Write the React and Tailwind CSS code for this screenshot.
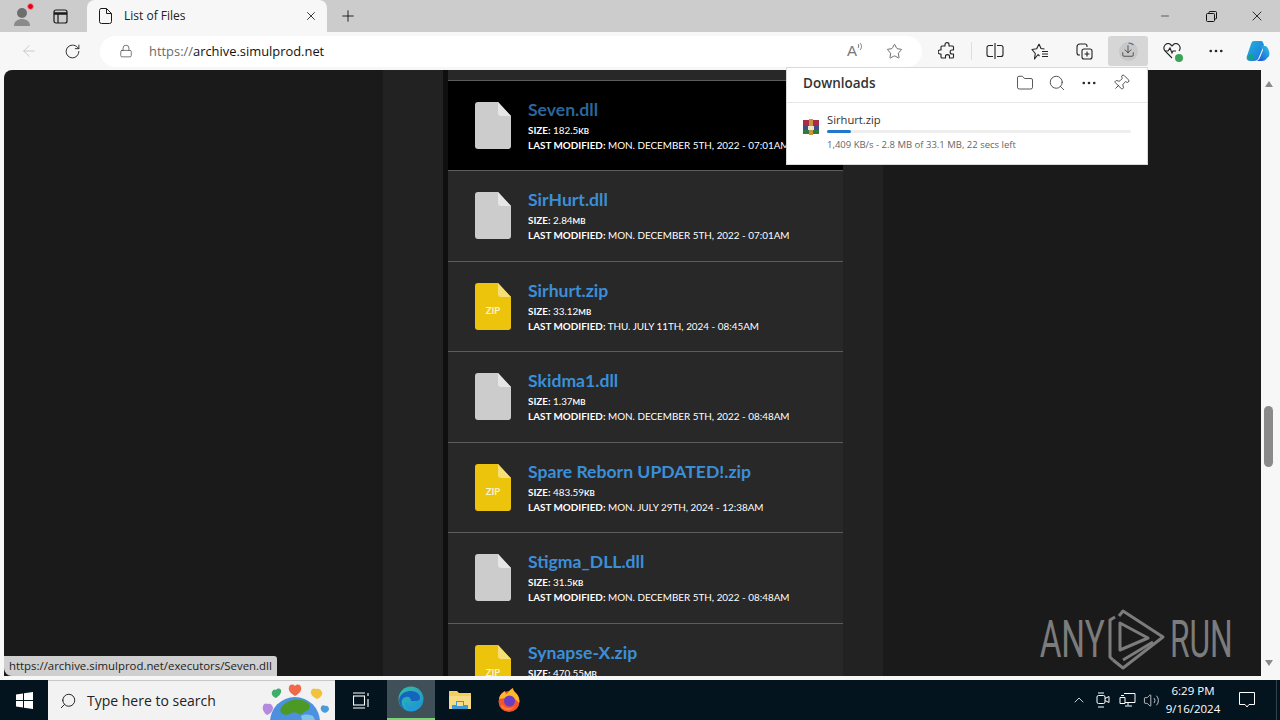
import React from "react";
import {
  ArrowLeft,
  RotateCw,
  Lock,
  Star,
  Folder,
  Search,
  MoreHorizontal,
  Pin,
  X,
  Plus,
  Minus,
  ChevronUp,
  Volume2,
  Download,
} from "lucide-react";

const files = [
  { name: "Seven.dll", size: "182.5", unit: "KB", date: "MON. DECEMBER 5TH, 2022 - 07:01AM", hover: true },
  { name: "SirHurt.dll", size: "2.84", unit: "MB", date: "MON. DECEMBER 5TH, 2022 - 07:01AM" },
  { name: "Sirhurt.zip", size: "33.12", unit: "MB", date: "THU. JULY 11TH, 2024 - 08:45AM", zip: true },
  { name: "Skidma1.dll", size: "1.37", unit: "MB", date: "MON. DECEMBER 5TH, 2022 - 08:48AM" },
  { name: "Spare Reborn UPDATED!.zip", size: "483.59", unit: "KB", date: "MON. JULY 29TH, 2024 - 12:38AM", zip: true },
  { name: "Stigma_DLL.dll", size: "31.5", unit: "KB", date: "MON. DECEMBER 5TH, 2022 - 08:48AM" },
  { name: "Synapse-X.zip", size: "470.55", unit: "MB", date: "MON. JULY 29TH, 2024 - 12:38AM", zip: true },
];

function FileIcon({ zip }) {
  const body = zip ? "#ecc40c" : "#cccccc";
  const fold = zip ? "#f5df76" : "#e6e6e6";
  return (
    <div className="relative w-9 h-[47px] shrink-0">
      <svg width="36" height="47" viewBox="0 0 36 47">
        <path d="M3 0H23L36 14V44a3 3 0 0 1-3 3H3a3 3 0 0 1-3-3V3a3 3 0 0 1 3-3Z" fill={body} />
        <path d="M23 0L36 14H26a3 3 0 0 1-3-3Z" fill={fold} />
      </svg>
      {zip && (
        <span className="absolute left-0 right-0 top-[23px] text-center text-[9.5px] leading-[10px] font-bold text-[#faf3cf]">
          ZIP
        </span>
      )}
    </div>
  );
}

function FileRow({ file }) {
  return (
    <div
      className={`h-[90.5px] border-t border-[#5c5c5c] pl-[27px] pt-[21px] flex gap-[17px] font-['Lato',sans-serif] ${
        file.hover ? "bg-black" : ""
      }`}
    >
      <FileIcon zip={file.zip} />
      <div className="text-white whitespace-nowrap">
        <div
          className={`text-[17.6px] leading-[16px] font-bold ${
            file.hover ? "text-[#2a669c]" : "text-[#3b8fd8]"
          }`}
        >
          {file.name}
        </div>
        <div className="mt-[5px] text-[9.9px] leading-[14px]">
          <b>SIZE:</b> {file.size}
          <b className="text-[8px]">{file.unit}</b>
        </div>
        <div className="text-[9.9px] leading-[14px]">
          <b>LAST MODIFIED:</b> {file.date}
        </div>
      </div>
    </div>
  );
}

function ToolIcon({ children, className = "" }) {
  return <div className={`w-10 h-[30px] flex items-center justify-center rounded-[3px] ${className}`}>{children}</div>;
}

function CopilotLogo() {
  return (
    <svg width="26" height="26" viewBox="0 0 26 26">
      <defs>
        <linearGradient id="cpA" x1="0" y1="0" x2="1" y2="1">
          <stop offset="0" stopColor="#1fb6d8" />
          <stop offset="1" stopColor="#1e6fe0" />
        </linearGradient>
        <linearGradient id="cpB" x1="1" y1="0" x2="0" y2="1">
          <stop offset="0" stopColor="#2ec4e8" />
          <stop offset="1" stopColor="#1c4fd0" />
        </linearGradient>
      </defs>
      <path d="M9 3h7c2 0 2 2 3 4l-5 12c-1 3-3 4-5 4H5c-3 0-4-3-3-5L6 6c.6-2 1.5-3 3-3Z" fill="url(#cpA)" />
      <path d="M14 8h6c2 0 3 2 4 5 1 4 0 6-2 7-1 2-3 3-5 3h-5c2-1 3-3 4-6l2-5c.4-2-2-3-4-4Z" fill="url(#cpB)" />
      <path d="M4 17c2-2 4-1 5 1l-1 4H5c-2 0-2-3-1-5Z" fill="#16a37f" />
    </svg>
  );
}

function RarIcon() {
  return (
    <svg width="16" height="16" viewBox="0 0 16 16" className="shrink-0 mt-[7px]">
      <rect x="0" y="1" width="16" height="5" fill="#a92b4a" />
      <rect x="0" y="6" width="16" height="5" fill="#3a4f8c" />
      <rect x="0" y="11" width="16" height="4" fill="#2f7a3c" />
      <rect x="6" y="0" width="4" height="16" fill="#c9943a" />
      <rect x="5" y="7" width="6" height="4" fill="#f0e6c8" />
    </svg>
  );
}

function SearchHero() {
  return (
    <svg width="70" height="40" viewBox="0 0 70 40">
      <path d="M35 16c-5-3-7-6-6-9 1-3 4-3 6-1 2-2 5-2 6 1 1 3-1 6-6 9Z" fill="#f0694b" />
      <path d="M16 18c-3-1-5-4-4-6 1-3 3-3 4-2 1-2 4-2 5 0 1 3-2 6-5 8Z" fill="#3fae6b" />
      <path d="M57 19c-4-2-7-5-6-8 1-3 4-3 5-2 2-1 5 0 6 3 1 3-2 6-5 7Z" fill="#f2c13d" />
      <path d="M7 35c-3-2-5-6-4-9 1-3 3-3 5-2 2-1 5 1 5 4 0 3-3 6-6 7Z" fill="#b38bdc" />
      <path d="M65 33c-3-1-5-3-4-6 1-2 3-2 4-1 2-1 4 1 4 3 0 2-2 3-4 4Z" fill="#4a9bdc" />
      <circle cx="35" cy="42" r="25" fill="#4c90e0" />
      <path d="M21 28c6-9 19-11 27-5 3 3 2 7-2 8-3 1-4 5-7 3-2-1-4-2-7-1-3 1-6 3-9 1-3-1-3-4-2-6Z" fill="#4c9a25" />
      <path d="M41 36c3-2 8-2 12 0l2 4H42Z" fill="#7fc4ea" />
    </svg>
  );
}

function EdgeLogo() {
  return (
    <svg width="26" height="26" viewBox="0 0 26 26">
      <defs>
        <linearGradient id="edA" x1="0" y1="0" x2="1" y2="1">
          <stop offset="0" stopColor="#35c1a0" />
          <stop offset="1" stopColor="#1b8ed8" />
        </linearGradient>
      </defs>
      <circle cx="13" cy="13" r="12.500" fill="url(#edA)" />
      <path d="M1 14C2 7 8 5 13 5c5 0 9 3 9 7 0 2-2 3-4 3h-5c0-3-2-5-5-4-4 1-5 4-4 8 1 2 2 4 3 5-3-2-6-6-6-10Z" fill="#1565c0" />
      <path d="M9 15c-1 4 2 7 6 7 3 0 6-1 8-3-2 4-6 6-10 6-4-1-7-6-4-10Z" fill="#1e9be0" />
    </svg>
  );
}

function FirefoxLogo() {
  return (
    <svg width="24" height="24" viewBox="0 0 24 24">
      <circle cx="12" cy="13.500" r="10.500" fill="#f2542d" />
      <path d="M2 11C3 6 6 4 8 3c0 2 1 3 2 3 1-2 4-5 6-6 0 2 1 3 3 5 3 3 4 7 3 10-2-2-4-5-8-6Z" fill="#ffb52c" />
      <circle cx="12.500" cy="13" r="5.500" fill="#6a3bc4" />
      <path d="M5 16c2 4 8 6 13 2-3 5-10 6-14 1Z" fill="#ff7b2e" />
    </svg>
  );
}

function FolderLogo() {
  return (
    <svg width="24" height="22" viewBox="0 0 24 22">
      <path d="M1 2h8l2 2h12v16H1Z" fill="#f4cf5e" />
      <rect x="1" y="7" width="22" height="13" fill="#f7dc85" />
      <path d="M8 12h8v4h4v4H4v-4h4Z" fill="#3f9bd8" />
      <rect x="9" y="13" width="6" height="4" fill="#f7dc85" />
    </svg>
  );
}

function RunMark() {
  return (
    <svg width="60" height="64" viewBox="0 0 60 64" fill="none" stroke="#7c7c7c" strokeWidth="3" strokeLinejoin="round" className="shrink-0">
      <path d="M7 9L2 12V49L5 52" />
      <path d="M5 52L15 60L55 29L15 3L11 8" />
      <path d="M12 15V42L40 30Z" />
      <path d="M15 52L45 34" />
    </svg>
  );
}

export default function App() {
  return (
    <div className="relative w-[1280px] h-[720px] overflow-hidden flex flex-col bg-[#f7f7f7] font-['Open_Sans','Noto_Sans',sans-serif]">
      {/* tab strip */}
      <div className="h-8 bg-[#cccccc] flex items-end shrink-0">
        <div className="w-[87px] h-8 flex items-center pl-[11px] gap-[20px]">
          <div className="relative w-[22px] h-[22px]">
            <svg width="22" height="22" viewBox="0 0 22 22">
              <circle cx="11" cy="8" r="5" fill="#6e6e6e" />
              <path d="M3 21c0-5 4-7 8-7s8 2 8 7Z" fill="#8a8a8a" />
            </svg>
            <span className="absolute right-[-1px] top-[-2px] w-[7px] h-[7px] rounded-full bg-[#e3001b] border border-[#e8a0a0]"></span>
          </div>
          <svg width="15" height="15" viewBox="0 0 15 15" fill="none" stroke="#1a1a1a" strokeWidth="1.2">
            <rect x="1" y="1" width="13" height="13" rx="2" />
            <path d="M1 4.500h13" strokeWidth="2.500" />
            <path d="M5 5v9" />
          </svg>
        </div>
        <div className="w-[240px] h-8 bg-[#f7f7f7] rounded-t-lg flex items-center pl-[12px] pr-[9px]">
          <svg width="13" height="16" viewBox="0 0 13 16" fill="none" stroke="#1a1a1a" strokeWidth="1">
            <path d="M2 .5h5.500L12.500 5.500V13.500a2 2 0 0 1-2 2H2.500a2 2 0 0 1-2-2V2.500a2 2 0 0 1 1.500-2Z" />
            <path d="M7.500.5V5.500H12.500" />
          </svg>
          <span className="ml-[12px] text-[12px] text-[#222]">List of Files</span>
          <X size={14} strokeWidth={1.5} className="ml-auto text-[#222]" />
        </div>
        <div className="h-8 flex items-center ml-[12px]">
          <Plus size={18} strokeWidth={1.2} className="text-[#111]" />
        </div>
        <div className="ml-auto h-8 flex items-center text-[#111]">
          <div className="w-[46px] flex justify-center">
            <Minus size={12} strokeWidth={1.2} />
          </div>
          <div className="w-[46px] flex justify-center">
            <svg width="11" height="11" viewBox="0 0 11 11" fill="none" stroke="#111">
              <rect x=".5" y="2.500" width="8" height="8" rx="1" />
              <path d="M3 2.500V1.500a1 1 0 0 1 1-1h5.500a1 1 0 0 1 1 1V7a1 1 0 0 1-1 1H8.500" />
            </svg>
          </div>
          <div className="w-[46px] flex justify-center">
            <X size={16} strokeWidth={1.3} />
          </div>
        </div>
      </div>

      {/* toolbar */}
      <div className="h-[38px] shrink-0 bg-[#f7f7f7] flex items-center text-[#222]">
        <div className="w-[56px] flex justify-center pl-[2px]">
          <ArrowLeft size={18} strokeWidth={1.2} className="text-[#c4c4c4]" />
        </div>
        <div className="w-[32px] flex justify-center">
          <RotateCw size={17} strokeWidth={1.3} className="text-[#222]" />
        </div>
        <div className="ml-[12px] w-[822px] h-[31px] bg-white rounded-full flex items-center pl-[19px] pr-[19px]">
          <Lock size={14} strokeWidth={1.2} className="text-[#444]" />
          <span className="ml-[16px] text-[12.9px] leading-[33px]">
            <span className="text-[#6a6a6a]">https://</span>
            <span className="text-[#111]">archive.simulprod.net</span>
          </span>
          <div className="ml-auto flex items-start text-[#777]">
            <span className="text-[15px] leading-[18px] font-['Liberation_Sans',sans-serif]">A</span>
            <svg width="6" height="9" viewBox="0 0 6 9" fill="none" stroke="#777" strokeWidth="1">
              <path d="M1 6c1-1 1-3 0-4M3 8c2-2 2-5 0-7" />
            </svg>
          </div>
          <Star size={17} strokeWidth={1.2} className="ml-[23px] text-[#555]" />
        </div>
        <div className="ml-[5px] flex items-center">
          <ToolIcon>
            <svg width="18" height="18" viewBox="0 0 18 18" fill="none" stroke="#222" strokeWidth="1.1" strokeLinejoin="round">
              <path d="M7 2.500c0-2.500 4-2.500 4 0V4h3.500a1 1 0 0 1 1 1v3H14c-2.500 0-2.500 4 0 4h1.500v3a1 1 0 0 1-1 1h-3v-1.500c0-2.500-4-2.500-4 0V16H4a1 1 0 0 1-1-1v-3H2c-2.500 0-2.500-4 0-4h1V5a1 1 0 0 1 1-1h3Z" />
            </svg>
          </ToolIcon>
          <div className="w-px h-[18px] bg-[#dedede] ml-[4px] mr-[3px]"></div>
          <ToolIcon>
            <svg width="18" height="18" viewBox="0 0 18 18" fill="none" stroke="#222" strokeWidth="1.1">
              <path d="M7 3.500H3a2 2 0 0 0-2 2v7a2 2 0 0 0 2 2h4M11 3.500h4a2 2 0 0 1 2 2v7a2 2 0 0 1-2 2h-4M9 1v16" />
            </svg>
          </ToolIcon>
          <ToolIcon className="ml-[5px]">
            <svg width="18" height="17" viewBox="0 0 18 17" fill="none" stroke="#222" strokeWidth="1.1" strokeLinejoin="round">
              <path d="M8 1l2 4.500 3.500.5M7 11.500L3.500 16l.8-5.500L1 6.500l4.700-.7L8 1M7 11.500l1.500 1.500" />
              <path d="M11 8.500h6M11 11h6M11 13.500h6" />
            </svg>
          </ToolIcon>
          <ToolIcon className="ml-[4px]">
            <svg width="17" height="17" viewBox="0 0 17 17" fill="none" stroke="#222" strokeWidth="1.1">
              <rect x="6" y="6" width="10" height="10" rx="2" />
              <path d="M11 8.500v5M8.500 11h5" />
              <path d="M4 12H3a2 2 0 0 1-2-2V4a3 3 0 0 1 3-3h5a2 2 0 0 1 2 2v1" />
            </svg>
          </ToolIcon>
          <ToolIcon className="ml-[4px] bg-[#d6d6d6]">
            <div className="relative w-[19px] h-[19px] rounded-full bg-[#c8c8c8] flex items-center justify-center">
              <Download size={14} strokeWidth={1.2} />
              <svg width="19" height="19" viewBox="0 0 19 19" fill="none" stroke="#4a6a85" strokeWidth="1.2" className="absolute left-0 top-0">
                <path d="M9.500 1a8.500 8.500 0 0 1 5 1.800" />
              </svg>
            </div>
          </ToolIcon>
          <ToolIcon className="ml-[4px]">
            <div className="relative">
              <svg width="18" height="16" viewBox="0 0 18 16" fill="none" stroke="#222" strokeWidth="1.1">
                <path d="M9 15L2 8C-1 4 3-1 7 1l2 2 2-2c4-2 8 3 5 7" />
                <path d="M2 8h3l2-3 2 5 1-2h3" />
              </svg>
              <span className="absolute right-[-2px] bottom-[-3px] w-[8px] h-[8px] rounded-full bg-[#3aa655]"></span>
            </div>
          </ToolIcon>
          <ToolIcon className="ml-[4px]">
            <MoreHorizontal size={18} strokeWidth={1.6} />
          </ToolIcon>
          <ToolIcon className="ml-[2px]">
            <CopilotLogo />
          </ToolIcon>
        </div>
      </div>

      {/* page area */}
      <div className="h-[606px] shrink-0 flex pl-1">
        <div className="w-[1257px] h-full rounded-tl-lg overflow-hidden flex bg-[#1a1a1a]">
          <div className="w-[379px]"></div>
          <div className="w-[60px] bg-[#222222]"></div>
          <div className="w-[5px] bg-[#0f0f0f]"></div>
          <div className="w-[395px] bg-[#282828] pt-[9.5px]">
            {files.map((f) => (
              <FileRow key={f.name} file={f} />
            ))}
          </div>
          <div className="w-[40px] bg-[#222222]"></div>
        </div>
        <div className="w-[19px] h-full flex flex-col items-center pr-[4px] pt-[11px]">
          <div className="w-0 h-0 border-x-[4px] border-x-transparent border-b-[6px] border-b-[#8a8a8a]"></div>
          <div className="mt-[319px] w-[9px] h-[61px] rounded-full bg-[#8a8a8a]"></div>
          <div className="mt-[193px] w-0 h-0 border-x-[4px] border-x-transparent border-t-[6px] border-t-[#8a8a8a]"></div>
        </div>
      </div>
      <div className="h-1 shrink-0 bg-[#f7f7f7]"></div>

      {/* taskbar */}
      <div className="h-10 shrink-0 bg-[#03141f] flex items-center text-white">
        <div className="w-12 flex justify-center">
          <svg width="17" height="17" viewBox="0 0 17 17" fill="#fff">
            <path d="M0 2.400 7 1.400V8H0ZM8 1.200 17 0V8H8ZM0 9h7v6.600L0 14.600ZM8 9h9v8L8 15.800Z" />
          </svg>
        </div>
        <div className="w-[287px] h-10 bg-[#f2f2f2] border-t border-[#c8c8c8] flex items-center pl-[11px] text-[#222] overflow-hidden">
          <Search size={18} strokeWidth={1.3} className="-scale-x-100" />
          <span className="ml-[10px] text-[14px]">Type here to search</span>
          <div className="ml-auto mr-[5px] self-end">
            <SearchHero />
          </div>
        </div>
        <div className="w-[52px] flex justify-center">
          <svg width="17" height="17" viewBox="0 0 17 17" fill="none" stroke="#fff" strokeWidth="1.1">
            <rect x=".5" y="4" width="11" height="9" />
            <path d="M0 1h12M0 16h12M15 1v3M15 7v8" />
          </svg>
        </div>
        <div className="w-12 h-10 bg-[#3f5059] border-b-2 border-[#76d672] flex items-center justify-center">
          <EdgeLogo />
        </div>
        <div className="w-[50px] flex justify-center">
          <FolderLogo />
        </div>
        <div className="w-[48px] flex justify-center">
          <FirefoxLogo />
        </div>
        <div className="ml-auto flex items-center">
          <ChevronUp size={16} strokeWidth={1.2} />
          <div className="ml-[4px] w-6 flex justify-center">
            <svg width="15" height="16" viewBox="0 0 15 16" fill="none" stroke="#fff" strokeWidth="1">
              <rect x="1" y="3.500" width="8" height="8" rx="1.500" />
              <path d="M9 6.500l4-2v6l-4-2" />
              <path d="M2 1h6M2 15h6" />
            </svg>
          </div>
          <div className="w-6 flex justify-center">
            <svg width="17" height="16" viewBox="0 0 17 16" fill="none" stroke="#fff" strokeWidth="1">
              <path d="M5 1.500h11v9H6M1 5.500h5v6H1ZM9 10.500v3M6 14h7" />
              <path d="M2 3.500h3" />
            </svg>
          </div>
          <div className="w-6 flex justify-center">
            <Volume2 size={17} strokeWidth={1} />
          </div>
          <div className="w-[60px] text-center text-[11.5px] leading-[18px]">
            <div>6:29 PM</div>
            <div>9/16/2024</div>
          </div>
          <div className="ml-[16px] w-[16px] flex justify-center">
            <svg width="16" height="16" viewBox="0 0 16 16" fill="none" stroke="#fff" strokeWidth="1">
              <path d="M.5.500h15v12H10l-2 2.500-2-2.500H.5Z" />
            </svg>
          </div>
          <div className="ml-[21px] w-px h-10 bg-[#33434d] mr-[3px]"></div>
        </div>
      </div>

      {/* downloads flyout */}
      <div className="absolute left-[786px] top-[67px] w-[362px] h-[98px] bg-white border border-[#d9d9d9] text-[#222]">
        <div className="h-[35px] border-b border-[#e6e6e6] flex items-center pl-[16px] pr-[17px] pb-[4px]">
          <span className="text-[13.5px] font-semibold text-[#333]">Downloads</span>
          <div className="ml-auto flex items-center gap-[14px]">
            <Folder size={18} strokeWidth={1} />
            <Search size={18} strokeWidth={1} />
            <MoreHorizontal size={18} strokeWidth={1.5} />
            <Pin size={18} strokeWidth={1} className="rotate-45" />
          </div>
        </div>
        <div className="flex items-start pl-[16px] pr-[16px] pt-[9px]">
          <RarIcon />
          <div className="ml-[8px] flex-1">
            <div className="text-[11.2px] leading-[16px] text-[#333]">Sirhurt.zip</div>
            <div className="mt-[2px] h-[3px] rounded-full bg-[#eeeeee]">
              <div className="h-[3px] w-[24px] rounded-full bg-[#1f78c8]"></div>
            </div>
            <div className="mt-[5px] text-[9.5px] leading-[14px] text-[#666]">
              1,409 KB/s - 2.8 MB of 33.1 MB, 22 secs left
            </div>
          </div>
        </div>
      </div>

      {/* link status */}
      <div className="absolute left-[4px] top-[656px] w-[273px] h-[20px] bg-[#cfcfcf] rounded-tr-[3px] rounded-bl-lg pl-[5px] text-[11.4px] leading-[19px] text-[#222] whitespace-nowrap">
        https://archive.simulprod.net/executors/Seven.dll
      </div>

      {/* watermark */}
      <div className="absolute left-[1039px] top-[608px] flex items-center text-[#7c7c7c] font-['Roboto',sans-serif] text-[52px] leading-[64px]">
        <span className="w-[69px] pl-px scale-x-[0.64] origin-left whitespace-nowrap">ANY</span>
        <RunMark />
        <span className="w-[62px] ml-[2px] scale-x-[0.61] origin-left whitespace-nowrap">RUN</span>
      </div>
    </div>
  );
}
